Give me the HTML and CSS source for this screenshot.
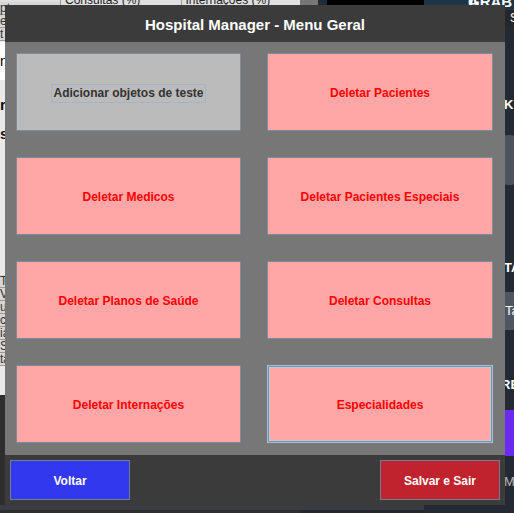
FILE: index.html
```html
<!DOCTYPE html>
<html lang="pt">
<head>
<meta charset="utf-8">
<title>Hospital Manager - Menu Geral</title>
<link rel="stylesheet" href="styles.css">
</head>
<body>
<div class="desktop">
  <div class="app-left">
    <div class="tbl-head">
      <div class="th th-a">Consultas (%)</div>
      <div class="th th-b">Internações (%)</div>
    </div>
    <div class="left-cells">
      <div class="cell">pt</div>
      <div class="cell">e</div>
      <div class="cell">t</div>
    </div>
    <div class="left-white">n</div>
    <div class="left-light">
      <span>r</span>
      <span>s</span>
    </div>
    <div class="left-rows">
      <div class="cell">T</div>
      <div class="cell">V</div>
      <div class="cell">u</div>
      <div class="cell">c</div>
      <div class="cell">ia</div>
      <div class="cell">S</div>
      <div class="cell">ta</div>
    </div>
    <div class="left-dark"></div>
  </div>
  <div class="app-mid-gray"></div>
  <div class="app-black"></div>
  <div class="app-right">
    <div class="r-banner">GRAB A</div>
    <div class="r-top">S</div>
    <div class="r-k">K</div>
    <div class="r-circle"></div>
    <div class="r-ta">TA</div>
    <div class="r-input">Ta</div>
    <div class="r-e">RE</div>
    <div class="r-purple"></div>
    <div class="r-ma">Ma</div>
  </div>
  <div class="bottom-strip"></div>

  <div class="dialog">
    <div class="titlebar">Hospital Manager - Menu Geral</div>
    <div class="grid">
      <button class="btn btn-gray"><span class="focus">Adicionar objetos de teste</span></button>
      <button class="btn">Deletar Pacientes</button>
      <button class="btn">Deletar Medicos</button>
      <button class="btn">Deletar Pacientes Especiais</button>
      <button class="btn">Deletar Planos de Saúde</button>
      <button class="btn">Deletar Consultas</button>
      <button class="btn">Deletar Internações</button>
      <button class="btn btn-focused">Especialidades</button>
    </div>
    <div class="footer">
      <button class="fbtn fbtn-blue">Voltar</button>
      <button class="fbtn fbtn-red">Salvar e Sair</button>
    </div>
  </div>
</div>
</body>
</html>
```
FILE: styles.css
```css
* { box-sizing: border-box; }
html, body {
  margin: 0;
  padding: 0;
  width: 514px;
  height: 513px;
  overflow: hidden;
  background: #24272e;
  font-family: "Liberation Sans", Arial, sans-serif;
}
.desktop {
  position: relative;
  width: 514px;
  height: 513px;
  overflow: hidden;
}

/* ---- background application windows ---- */
.app-left {
  position: absolute;
  left: 0; top: 0;
  width: 300px;
  height: 513px;
  background: #e9e9e9;
}
.tbl-head {
  position: absolute;
  left: 0; top: -6px;
  width: 300px;
  height: 13px;
  display: flex;
  background: #e0e0e0;
}
.th {
  font-size: 12px;
  color: #222;
  padding-left: 4px;
  border-left: 1px solid #999;
  line-height: 12px;
  white-space: nowrap;
}
.th-a { margin-left: 60px; width: 121px; }
.th-b { width: 120px; }
.left-cells, .left-rows {
  position: absolute;
  left: 0;
  width: 60px;
  display: flex;
  flex-direction: column;
  font-size: 12px;
  color: #333;
}
.left-cells { top: 2px; }
.left-rows { top: 275px; }
.cell {
  height: 13px;
  line-height: 12px;
  background: #d6d6d6;
  border-bottom: 1px solid #999;
}
.left-white {
  position: absolute;
  left: 0; top: 42px;
  width: 60px; height: 38px;
  background: #fff;
  font-size: 14px;
  line-height: 38px;
  color: #000;
}
.left-light {
  position: absolute;
  left: 0; top: 80px;
  width: 60px; height: 195px;
  display: flex;
  flex-direction: column;
  font-size: 15px;
  font-weight: bold;
  color: #111;
  padding-top: 16px;
  gap: 12px;
}
.left-dark {
  position: absolute;
  left: 0; top: 395px;
  width: 300px; height: 118px;
  background: #2e2e2e;
}
.app-mid-gray {
  position: absolute;
  left: 300px; top: 0;
  width: 18px; height: 10px;
  background: #777;
}
.app-black {
  position: absolute;
  left: 318px; top: 0;
  width: 106px; height: 10px;
  background: #000;
  border-left: 9px solid #1e2b38;
}
.app-right {
  position: absolute;
  left: 424px; top: 0;
  width: 90px; height: 513px;
  background: #242a33;
}
.r-banner {
  height: 10px;
  background: #1f3447;
  color: #fff;
  font-weight: bold;
  font-size: 15px;
  line-height: 0;
  padding-left: 44px;
  padding-top: 2px;
  overflow: hidden;
}
.r-top {
  position: absolute;
  top: 10px; left: 0;
  width: 90px; height: 16px;
  background: #262626;
  color: #fff;
  font-size: 12px;
  padding-left: 86px;
  line-height: 16px;
}
.r-k, .r-ta, .r-e {
  position: absolute;
  color: #fff;
  font-weight: bold;
  font-size: 13px;
  left: 80px;
}
.r-k { top: 97px; }
.r-ta { top: 260px; }
.r-e { top: 377px; left: 77px; }
.r-circle {
  position: absolute;
  left: 60px; top: 135px;
  width: 50px; height: 50px;
  border-radius: 50%;
  background: #4f5260;
}
.r-input {
  position: absolute;
  left: 60px; top: 292px;
  width: 40px; height: 38px;
  background: #4f5562;
  color: #fff;
  font-size: 13px;
  line-height: 38px;
  padding-left: 21px;
}
.r-purple {
  position: absolute;
  left: 60px; top: 410px;
  width: 40px; height: 46px;
  background: #6b2af0;
}
.r-ma {
  position: absolute;
  left: 80px; top: 474px;
  color: #b8b8b8;
  font-size: 13px;
}
.bottom-strip {
  position: absolute;
  left: 0; top: 505px;
  width: 424px; height: 5px;
  background: #3b3c41;
}

/* ---- dialog ---- */
.dialog {
  position: absolute;
  left: 5px; top: 5px;
  width: 500px; height: 500px;
  display: flex;
  flex-direction: column;
  background: #777777;
}
.titlebar {
  height: 37px;
  flex: none;
  background: #3b3b3b;
  color: #fff;
  font-weight: bold;
  font-size: 15px;
  display: flex;
  align-items: center;
  justify-content: center;
  padding-top: 1px;
}
.grid {
  flex: 1;
  display: grid;
  grid-template-columns: 225px 226px;
  grid-template-rows: repeat(4, 78px);
  column-gap: 26px;
  row-gap: 26px;
  padding: 11px 12px 12px 11px;
}
.btn {
  margin: 0;
  border: 1px solid #7f8b97;
  background: #ffa6a6;
  color: #ff0000;
  font-family: "Liberation Sans", Arial, sans-serif;
  font-weight: bold;
  font-size: 12px;
  display: flex;
  align-items: center;
  justify-content: center;
  padding: 2px 0 0 0;
}
.btn-gray {
  background: #bbbbbb;
  color: #333333;
}
.focus {
  border: 1px solid #a3b4c8;
  padding: 2px 1px 2px 1px;
  line-height: 13px;
}
.btn-focused {
  border: 1px solid #a9c1d8;
  box-shadow: inset 0 0 0 1px #7e8c98, inset 0 0 0 2px #b7cfe4;
}
.footer {
  height: 50px;
  flex: none;
  background: #3b3b3b;
  display: flex;
  justify-content: space-between;
  align-items: flex-start;
  padding: 5px 5px 0 5px;
}
.fbtn {
  margin: 0;
  width: 120px;
  height: 40px;
  border: 1px solid #6f7f90;
  color: #fff;
  font-family: "Liberation Sans", Arial, sans-serif;
  font-weight: bold;
  font-size: 12px;
  padding: 2px 0 0 0;
}
.fbtn-blue { background: #3238ee; }
.fbtn-red { background: #c0222e; }
```
